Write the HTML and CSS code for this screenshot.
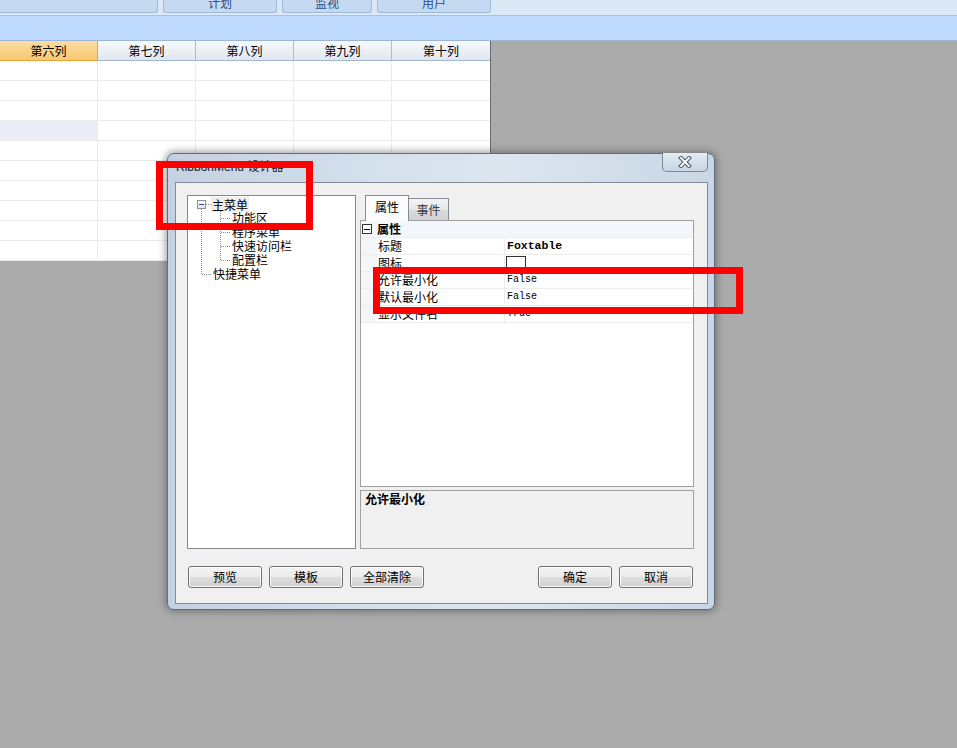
FILE: index.html
```html
<!DOCTYPE html>
<html>
<head>
<meta charset="utf-8">
<link rel="stylesheet" href="styles.css">
</head>
<body>
<div class="ribbon-tabs">
  <div class="rtab rtab-first"><span class="rtab-label">&nbsp;</span></div>
  <div class="rtab rtab-plan"><span class="rtab-label">计划</span></div>
  <div class="rtab rtab-mon"><span class="rtab-label">监视</span></div>
  <div class="rtab rtab-user"><span class="rtab-label">用户</span></div>
</div>
<div class="ribbon-bar"></div>

<div class="grid">
  <div class="grid-row grid-head">
    <div class="hcell hcell-sel">第六列</div>
    <div class="hcell">第七列</div>
    <div class="hcell">第八列</div>
    <div class="hcell">第九列</div>
    <div class="hcell">第十列</div>
  </div>
  <div class="grid-row"><div class="cell"></div><div class="cell"></div><div class="cell"></div><div class="cell"></div><div class="cell"></div></div>
  <div class="grid-row"><div class="cell"></div><div class="cell"></div><div class="cell"></div><div class="cell"></div><div class="cell"></div></div>
  <div class="grid-row"><div class="cell"></div><div class="cell"></div><div class="cell"></div><div class="cell"></div><div class="cell"></div></div>
  <div class="grid-row"><div class="cell cell-cur"></div><div class="cell"></div><div class="cell"></div><div class="cell"></div><div class="cell"></div></div>
  <div class="grid-row"><div class="cell"></div><div class="cell"></div><div class="cell"></div><div class="cell"></div><div class="cell"></div></div>
  <div class="grid-row"><div class="cell"></div><div class="cell"></div><div class="cell"></div><div class="cell"></div><div class="cell"></div></div>
  <div class="grid-row"><div class="cell"></div><div class="cell"></div><div class="cell"></div><div class="cell"></div><div class="cell"></div></div>
  <div class="grid-row"><div class="cell"></div><div class="cell"></div><div class="cell"></div><div class="cell"></div><div class="cell"></div></div>
  <div class="grid-row"><div class="cell"></div><div class="cell"></div><div class="cell"></div><div class="cell"></div><div class="cell"></div></div>
  <div class="grid-row"><div class="cell"></div><div class="cell"></div><div class="cell"></div><div class="cell"></div><div class="cell"></div></div>
</div>

<div class="dialog">
  <div class="titlebar">
    <span class="title">RibbonMenu 设计器</span>
    <div class="close-btn">
      <svg width="14" height="12" viewBox="0 0 14 12">
        <path d="M3 2 L11 10 M11 2 L3 10" stroke="#4b5363" stroke-width="4" stroke-linecap="square" fill="none"/>
        <path d="M3 2 L11 10 M11 2 L3 10" stroke="#ffffff" stroke-width="2" stroke-linecap="square" fill="none"/>
      </svg>
    </div>
  </div>
  <div class="client">
    <div class="main-row">
      <div class="tree">
        <div class="trow">
          <span class="g g-root"><span class="minus-box"><span class="minus"></span></span></span>
          <span class="tlabel tlabel-sel">主菜单</span>
        </div>
        <div class="trow">
          <span class="g g-pass"></span><span class="g1 g1-first"></span><span class="tlabel">功能区</span>
        </div>
        <div class="trow">
          <span class="g g-pass"></span><span class="g1 g1-mid"></span><span class="tlabel">程序菜单</span>
        </div>
        <div class="trow">
          <span class="g g-pass"></span><span class="g1 g1-mid"></span><span class="tlabel">快速访问栏</span>
        </div>
        <div class="trow">
          <span class="g g-pass"></span><span class="g1 g1-last"></span><span class="tlabel">配置栏</span>
        </div>
        <div class="trow">
          <span class="g g-last"></span><span class="tlabel tlabel-l0">快捷菜单</span>
        </div>
      </div>
      <div class="right-col">
        <div class="tabstrip">
          <div class="ptab ptab-active">属性</div>
          <div class="ptab ptab-idle">事件</div>
        </div>
        <div class="pgrid">
          <div class="pcat">
            <span class="pcat-box"><span class="pcat-minus"></span></span>
            <span class="pcat-label">属性</span>
          </div>
          <div class="prow"><span class="pgut"></span><span class="pname">标题</span><span class="pval pval-bold">Foxtable</span></div>
          <div class="prow"><span class="pgut"></span><span class="pname">图标</span><span class="pval"><span class="icon-box"></span></span></div>
          <div class="prow"><span class="pgut"></span><span class="pname">允许最小化</span><span class="pval">False</span></div>
          <div class="prow"><span class="pgut"></span><span class="pname">默认最小化</span><span class="pval">False</span></div>
          <div class="prow"><span class="pgut"></span><span class="pname">显示文件名</span><span class="pval">True</span></div>
          <div class="pfill"><span class="pgut"></span></div>
        </div>
        <div class="pdesc">允许最小化</div>
      </div>
    </div>
    <div class="btn-row">
      <div class="btn-group">
        <div class="btn">预览</div>
        <div class="btn">模板</div>
        <div class="btn">全部清除</div>
      </div>
      <div class="btn-group">
        <div class="btn">确定</div>
        <div class="btn">取消</div>
      </div>
    </div>
  </div>
</div>

<div class="mark mark-tree"></div>
<div class="mark mark-props"></div>
</body>
</html>
```

FILE: styles.css
```css
* { box-sizing: border-box; }

body {
  margin: 0;
  width: 957px;
  height: 748px;
  overflow: hidden;
  position: relative;
  background: #ababab;
  font-family: "Noto Sans CJK SC", "Liberation Sans", sans-serif;
  font-size: 12px;
  color: #000;
}

/* ribbon */
.ribbon-tabs {
  height: 15px;
  background: #dce8f5;
  display: flex;
  gap: 5px;
}
.rtab {
  height: 13px;
  background: #c5d9f0;
  border: 1px solid #9dbbdc;
  border-top: none;
  border-radius: 0 0 3px 3px;
  overflow: hidden;
  text-align: center;
  color: #2a4f8a;
  font-size: 12px;
}
.rtab-first { width: 158px; border-left: none; border-radius: 0 0 3px 0; }
.rtab-plan { width: 114px; }
.rtab-mon { width: 90px; }
.rtab-user { width: 114px; }
.rtab-label {
  display: block;
  line-height: 14px;
  margin-top: -4px;
}
.ribbon-bar {
  height: 26px;
  background: #bedbff;
  border-top: 1px solid #a7c2e1;
  border-bottom: 1px solid #9ab6da;
}

/* grid */
.grid {
  width: 491px;
  background: #fff;
  border-right: 1px solid #6c6c6c;
}
.grid-row {
  display: grid;
  grid-template-columns: 98px 98px 98px 98px 98px;
}
.hcell {
  height: 20px;
  line-height: 19px;
  text-align: center;
  background: linear-gradient(#f7f9fc, #e1e7f0);
  border-right: 1px solid #a9bdd4;
  border-bottom: 1px solid #9fb7d0;
}
.hcell-sel {
  background: linear-gradient(#fbdca3, #f7c970);
  border-right: 1px solid #f0a33d;
  border-bottom: 1px solid #f0a33d;
}
.hcell:last-child { border-right: none; }
.cell {
  height: 20px;
  border-right: 1px solid #ebebeb;
  border-bottom: 1px solid #ebebeb;
}
.cell:last-child { border-right: none; }
.cell-cur { background: #eaedf5; }

/* dialog */
.dialog {
  position: absolute;
  left: 167px;
  top: 153px;
  width: 548px;
  height: 457px;
  border: 1px solid #5f6c7c;
  border-radius: 7px;
  background: linear-gradient(to right, #c3d1e2 0%, #d3dfeb 35%, #dde6ef 60%, #c9d6e5 100%);
  box-shadow: 0 0 7px 2px rgba(60, 60, 60, 0.45);
  display: flex;
  flex-direction: column;
  padding: 0 6px 5px 7px;
}
.titlebar {
  height: 28px;
  display: flex;
  justify-content: space-between;
  align-items: flex-start;
  padding-left: 1px;
}
.title {
  font-family: "Liberation Sans", "Noto Sans CJK SC", sans-serif;
  font-size: 12px;
  line-height: 14px;
  padding-top: 6px;
  color: #1b1b1b;
}
.close-btn {
  width: 46px;
  height: 19px;
  margin-top: -1px;
  border: 1px solid #7b889b;
  border-top: none;
  border-radius: 0 0 5px 5px;
  background: linear-gradient(#e4ebf3, #c9d5e3);
  display: flex;
  align-items: center;
  justify-content: center;
}
.client {
  flex: 1;
  background: #f0f0f0;
  border: 1px solid #808b98;
  padding: 12px 13px 0 11px;
  display: flex;
  flex-direction: column;
}
.main-row {
  display: flex;
  gap: 4px;
  height: 354px;
}

/* tree */
.tree {
  width: 169px;
  height: 354px;
  background: #fff;
  border: 1px solid #828790;
  padding: 1px 0 0 9px;
}
.trow {
  height: 14px;
  display: flex;
  align-items: center;
}
.g, .g1 {
  height: 14px;
  flex: none;
  background-repeat: no-repeat;
}
.g { width: 14px; }
.g1 { width: 20px; }
.g-root {
  display: flex;
  align-items: center;
  background-image:
    repeating-linear-gradient(to right, #8a8a8a 0 1px, transparent 1px 2px),
    repeating-linear-gradient(to bottom, #8a8a8a 0 1px, transparent 1px 2px);
  background-size: 5px 1px, 1px 4px;
  background-position: 9px 7px, 4px 12px;
}
.g-pass {
  background-image: repeating-linear-gradient(to bottom, #8a8a8a 0 1px, transparent 1px 2px);
  background-size: 1px 14px;
  background-position: 4px 0;
}
.g-last {
  background-image:
    repeating-linear-gradient(to bottom, #8a8a8a 0 1px, transparent 1px 2px),
    repeating-linear-gradient(to right, #8a8a8a 0 1px, transparent 1px 2px);
  background-size: 1px 7px, 9px 1px;
  background-position: 4px 0, 5px 7px;
}
.g1-first, .g1-mid, .g1-last {
  background-image:
    repeating-linear-gradient(to bottom, #8a8a8a 0 1px, transparent 1px 2px),
    repeating-linear-gradient(to right, #8a8a8a 0 1px, transparent 1px 2px);
  background-position: 9px 0, 10px 7px;
}
.g1-first { background-size: 1px 14px, 10px 1px; }
.g1-mid { background-size: 1px 14px, 10px 1px; }
.g1-last { background-size: 1px 8px, 10px 1px; }
.minus-box {
  width: 9px;
  height: 9px;
  border: 1px solid #919191;
  background: linear-gradient(#ffffff, #e4e4e4);
  display: flex;
  align-items: center;
  justify-content: center;
}
.minus {
  width: 5px;
  height: 1px;
  background: #30419a;
}
.tlabel {
  line-height: 14px;
  padding: 0 1px;
  white-space: nowrap;
}
.tlabel-sel {
  background: #eeeeee;
  line-height: 15px;
}
.tlabel-l0 { padding-left: 2px; }

/* right column */
.right-col {
  width: 334px;
  display: flex;
  flex-direction: column;
}
.tabstrip {
  height: 25px;
  display: flex;
  align-items: flex-end;
  padding-left: 5px;
  position: relative;
  z-index: 1;
}
.ptab {
  border: 1px solid #898c95;
  border-bottom: none;
  text-align: center;
}
.ptab-active {
  width: 44px;
  height: 26px;
  margin-bottom: -1px;
  background: #fcfcfc;
  line-height: 22px;
}
.ptab-idle {
  width: 40px;
  height: 22px;
  border-left: none;
  background: linear-gradient(#f3f3f3, #e6e6e6 50%, #dadada 51%, #d2d2d2);
  line-height: 21px;
  color: #3a3a3a;
}
.pgrid {
  height: 267px;
  background: #fff;
  border: 1px solid #a0a0a0;
  display: flex;
  flex-direction: column;
}
.pcat {
  height: 17px;
  flex: none;
  background: #f3f6fb;
  border-bottom: 1px solid #ededed;
  display: flex;
  align-items: center;
  padding-left: 1px;
}
.pcat-box {
  width: 10px;
  height: 10px;
  border: 1px solid #333;
  background: #fff;
  display: flex;
  align-items: center;
  justify-content: center;
}
.pcat-minus { width: 6px; height: 1px; background: #000; }
.pcat-label {
  font-weight: bold;
  margin-left: 5px;
  line-height: 16px;
}
.prow {
  height: 17px;
  flex: none;
  display: flex;
  border-bottom: 1px solid #ededed;
}
.pgut {
  width: 16px;
  flex: none;
  background: #f3f6fb;
}
.pname {
  width: 128px;
  flex: none;
  line-height: 16px;
  padding-left: 1px;
  border-right: 1px solid #ededed;
}
.pval {
  flex: 1;
  font-family: "Liberation Mono", monospace;
  font-size: 10px;
  line-height: 16px;
  padding-left: 2px;
}
.pval-bold {
  font-weight: bold;
  font-size: 11.5px;
}
.icon-box {
  display: block;
  width: 20px;
  height: 15px;
  margin-top: 1px;
  margin-left: -1px;
  border: 1px solid #333;
  border-bottom: none;
  background: #fff;
}
.pfill {
  flex: 1;
  display: flex;
}
.pfill .pgut { background: #fff; }
.pdesc {
  margin-top: 3px;
  height: 59px;
  border: 1px solid #a0a0a0;
  background: #f0f0f0;
  font-weight: bold;
  padding: 1px 0 0 4px;
  line-height: 14px;
}

/* buttons */
.btn-row {
  margin-top: 17px;
  display: flex;
  justify-content: space-between;
  padding: 0 1px 0 1px;
}
.btn-group {
  display: flex;
  gap: 7px;
}
.btn {
  width: 74px;
  height: 22px;
  border: 1px solid #707070;
  border-radius: 3px;
  background: linear-gradient(#f4f4f4 0%, #ebebeb 48%, #dddddd 52%, #d1d1d1 100%);
  text-align: center;
  line-height: 20px;
  box-shadow: inset 0 0 0 1px #fbfbfb;
}

/* red highlight frames */
.mark {
  position: absolute;
  border: 7px solid #ff0000;
}
.mark-tree {
  left: 156px;
  top: 161px;
  width: 157px;
  height: 69px;
}
.mark-props {
  left: 373px;
  top: 267px;
  width: 370px;
  height: 47px;
}
```
